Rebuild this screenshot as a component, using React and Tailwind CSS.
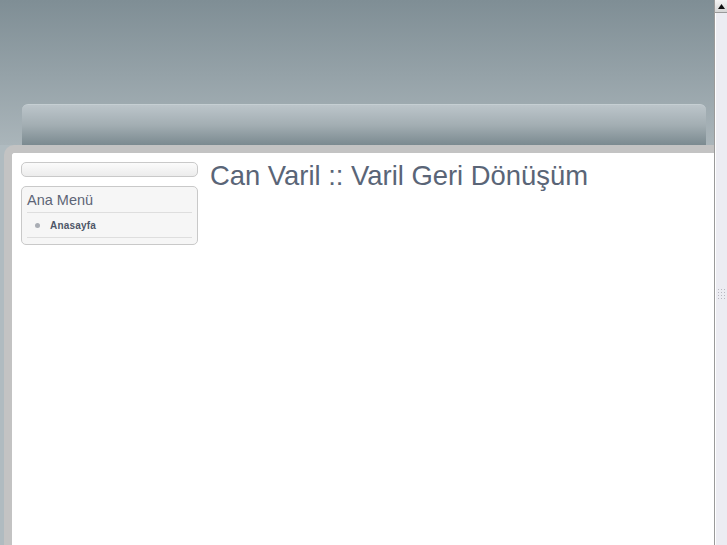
import React from "react";

function Scrollbar() {
  return (
    <div className="w-[13px] h-full flex flex-col bg-[#e4e4ea] border-l border-[#9a9a9a]">
      <div className="h-[13px] flex items-center justify-center bg-gradient-to-b from-[#f4f4f4] to-[#d6d6d6] border-b border-[#9a9a9a]">
        <svg width="7" height="5" viewBox="0 0 7 5">
          <polygon points="3.5,0 7,5 0,5" fill="#111" />
        </svg>
      </div>
      <div className="flex-1 flex flex-col items-center justify-start pt-[276px] bg-[#ececf2] border-l border-white">
        <div className="grid grid-cols-3 gap-[2px]">
          {Array.from({ length: 12 }).map((_, i) => (
            <div key={i} className="w-[1px] h-[1px] bg-[#b8b8c0]" />
          ))}
        </div>
      </div>
    </div>
  );
}

function Sidebar() {
  return (
    <aside className="w-[177px] shrink-0 flex flex-col gap-[9px] pt-[1px]">
      <div className="h-[15px] rounded-[5px] border border-[#c9c9c9] bg-gradient-to-b from-[#fbfbfb] to-[#ececec]" />
      <div className="rounded-[5px] border border-[#c9c9c9] bg-[#f6f6f6] px-[5px] pb-[6px]">
        <h3 className="text-[14.5px] leading-[24px] pt-[1px] text-[#5d6577] border-b border-[#dedede]">
          Ana Menü
        </h3>
        <ul className="border-b border-[#dedede]">
          <li className="flex items-center h-[24px] pl-[8px]">
            <span className="w-[5px] h-[5px] rounded-full bg-[#a9adb4] mr-[10px]" />
            <a className="text-[10px] font-bold text-[#4e5668] tracking-[0.2px]">Anasayfa</a>
          </li>
        </ul>
      </div>
    </aside>
  );
}

export default function App() {
  return (
    <div
      className="w-[727px] h-[545px] flex overflow-hidden"
      style={{ fontFamily: '"Liberation Sans", Arial, sans-serif' }}
    >
      <div className="w-[714px] h-full flex flex-col bg-[#b0bbc0]">
        <div className="pt-[104px] pl-[22px] pr-[8px] bg-gradient-to-b from-[#7f8e95] to-[#aab5ba]">
          <div className="h-[41px] rounded-t-[6px] border-t border-[#c6cfd3] bg-gradient-to-b from-[#bcc5ca] via-[#a3aeb3] to-[#7b8a90]" />
        </div>
        <div className="flex-1 ml-[4px] rounded-tl-[10px] border-l-[8px] border-t-[8px] border-[#c3c3c3] bg-white flex pl-[9px] pt-[8px]">
          <Sidebar />
          <main className="pl-[12px]">
            <h1 className="text-[27.4px] leading-[28px] mt-[1px] text-[#5a6577]">
              Can Varil :: Varil Geri Dönüşüm
            </h1>
          </main>
        </div>
      </div>
      <Scrollbar />
    </div>
  );
}
